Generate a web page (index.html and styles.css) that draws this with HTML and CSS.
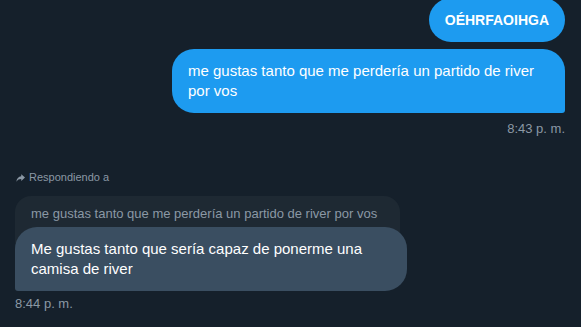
FILE: index.html
```html
<!DOCTYPE html>
<html lang="es">
<head>
    <meta charset="UTF-8">
    <meta name="viewport" content="width=device-width, initial-scale=1.0">
    <title>Mensajes</title>
    <link rel="stylesheet" href="styles.css">
</head>
<body>

<div class="chat">
    <div class="group sent">
        <div class="bubble pill">OÉHRFAOIHGA</div>
        <div class="bubble sent-bubble">me gustas tanto que me perdería un partido de river por vos</div>
        <div class="time">8:43 p. m.</div>
    </div>

    <div class="group received">
        <div class="reply-label">
            <svg class="reply-icon" viewBox="0 0 12 12" width="9" height="9">
                <path d="M7 1.5 L12 6 L7 10.5 V8 C4.2 8 2.2 9 0.5 11.5 C1 7.5 3.2 5 7 4.4 Z" fill="currentColor"/>
            </svg>
            <span>Respondiendo a</span>
        </div>
        <div class="quote">me gustas tanto que me perdería un partido de river por vos</div>
        <div class="bubble recv-bubble">Me gustas tanto que sería capaz de ponerme una camisa de river</div>
        <div class="time">8:44 p. m.</div>
    </div>
</div>

</body>
</html>
```

FILE: styles.css
```css
body {
    margin: 0;
    background-color: #15202b;
    font-family: "Liberation Sans", Arial, sans-serif;
    color: #fff;
    height: 327px;
    overflow: hidden;
}

.chat {
    padding: 0 16px 0 15px;
}

.group {
    display: flex;
    flex-direction: column;
}

.sent {
    align-items: flex-end;
}

.received {
    align-items: flex-start;
    margin-top: 32px;
}

.bubble {
    font-size: 15px;
    line-height: 20px;
    padding: 12px 16px;
    box-sizing: border-box;
}

.pill {
    margin-top: -2px;
    background-color: #1d9bf0;
    border-radius: 22px;
    font-weight: bold;
    font-size: 14px;
}

.sent-bubble {
    margin-top: 7px;
    width: 393px;
    background-color: #1d9bf0;
    border-radius: 22px 22px 3px 22px;
}

.time {
    font-size: 13px;
    line-height: 16px;
    color: #8b98a5;
    margin-top: 8px;
}

.reply-label {
    display: flex;
    align-items: center;
    gap: 4px;
    font-size: 11px;
    line-height: 16px;
    color: #8b98a5;
    padding-left: 1px;
}

.reply-icon {
    display: block;
}

.quote {
    margin-top: 11px;
    width: 385px;
    box-sizing: border-box;
    background-color: #1e2933;
    border-radius: 16px 16px 0 0;
    color: #8b98a5;
    font-size: 13px;
    line-height: 18px;
    padding: 9px 16px 20px 16px;
    white-space: nowrap;
}

.recv-bubble {
    position: relative;
    margin-top: -16px;
    width: 392px;
    background-color: #3a4e61;
    border-radius: 22px 22px 22px 3px;
}

.received .time {
    margin-top: 5px;
}
```
